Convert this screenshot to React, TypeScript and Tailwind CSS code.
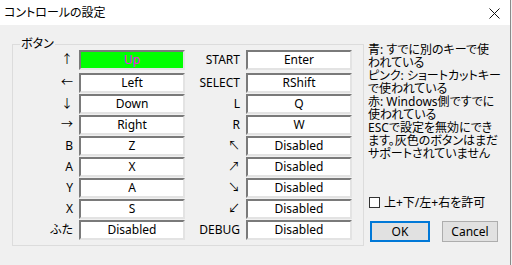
import React from 'react';

type Row = {
  leftLabel: string;
  leftKey: string;
  rightLabel: string;
  rightKey: string;
};

const ROWS: Row[] = [
  { leftLabel: '↑', leftKey: 'Up', rightLabel: 'START', rightKey: 'Enter' },
  { leftLabel: '←', leftKey: 'Left', rightLabel: 'SELECT', rightKey: 'RShift' },
  { leftLabel: '↓', leftKey: 'Down', rightLabel: 'L', rightKey: 'Q' },
  { leftLabel: '→', leftKey: 'Right', rightLabel: 'R', rightKey: 'W' },
  { leftLabel: 'B', leftKey: 'Z', rightLabel: '↖', rightKey: 'Disabled' },
  { leftLabel: 'A', leftKey: 'X', rightLabel: '↗', rightKey: 'Disabled' },
  { leftLabel: 'Y', leftKey: 'A', rightLabel: '↘', rightKey: 'Disabled' },
  { leftLabel: 'X', leftKey: 'S', rightLabel: '↙', rightKey: 'Disabled' },
  { leftLabel: 'ふた', leftKey: 'Disabled', rightLabel: 'DEBUG', rightKey: 'Disabled' },
];

const NOTES = [
  '青: すでに別のキーで使',
  'われている',
  'ピンク: ショートカットキー',
  'で使われている',
  '赤: Windows側ですでに',
  '使われている',
  'ESCで設定を無効にでき',
  'ます。灰色のボタンはまだ',
  'サポートされていません',
];

const KeyField: React.FC<{ value: string; highlight?: boolean }> = ({ value, highlight }) => (
  <div
    className={`h-[20px] border-2 border-t-[#7a7a7a] border-l-[#7a7a7a] border-b-[#e3e3e3] border-r-[#e3e3e3] flex items-center justify-center leading-[16px] ${
      highlight ? 'bg-[#00ff00] text-[#ff00ff]' : 'bg-white text-black'
    }`}
  >
    {value}
  </div>
);

const Label: React.FC<{ text: string }> = ({ text }) => (
  <div className="h-[20px] flex items-center justify-end leading-[20px] text-black">{text}</div>
);

export default function App() {
  return (
    <div
      className="w-[512px] h-[265px] bg-[#f0f0f0] text-[12px] text-black [font-feature-settings:'palt']"
      style={{ fontFamily: '"Noto Sans", "Noto Sans CJK JP", sans-serif' }}
    >
      <div className="w-[511px] h-[265px] border-r border-[#8a8a8a] flex flex-col">
        {/* title bar */}
        <div className="h-[25px] bg-white flex items-center justify-between pl-[4px] pr-[10px]">
          <span className="leading-[14px]">コントロールの設定</span>
          <svg width="11" height="11" viewBox="0 0 11 11" className="mt-[1px]">
            <path d="M0.5 0.5 L10.5 10.5 M10.5 0.5 L0.5 10.5" stroke="#111" strokeWidth="1" />
          </svg>
        </div>

        {/* body */}
        <div className="flex-1 flex pl-[12px]">
          <div className="relative mt-[19px] w-[352px] h-[202px] border border-[#dcdcdc]">
            <span className="absolute -top-[8px] left-[7px] px-[1px] bg-[#f0f0f0] leading-[14px]">ボタン</span>
            <div className="grid grid-cols-[60px_106px_49px_106px] gap-x-[6px] gap-y-[1px] pt-[5px]">
              {ROWS.map((r, i) => (
                <React.Fragment key={i}>
                  <div className={i === 0 ? 'mb-[2px]' : ''}>
                    <Label text={r.leftLabel} />
                  </div>
                  <div className={i === 0 ? 'mb-[2px]' : ''}>
                    <KeyField value={r.leftKey} highlight={i === 0} />
                  </div>
                  <div className={i === 0 ? 'mb-[2px]' : ''}>
                    <Label text={r.rightLabel} />
                  </div>
                  <div className={i === 0 ? 'mb-[2px]' : ''}>
                    <KeyField value={r.rightKey} />
                  </div>
                </React.Fragment>
              ))}
            </div>
          </div>

          <div className="ml-[4px] pt-[18px] flex flex-col">
            <div className="leading-[13px]">
              {NOTES.map((line) => (
                <div key={line} className="whitespace-nowrap">
                  {line}
                </div>
              ))}
            </div>

            <div className="mt-[36px] flex items-center h-[13px] pl-[1px]">
              <div className="w-[11px] h-[11px] border border-[#333] bg-white" />
              <span className="ml-[4px] leading-[13px]">上+下/左+右を許可</span>
            </div>

            <div className="mt-[12px] flex items-center pl-[2px]">
              <button className="w-[60px] h-[21px] border-2 border-[#0078d7] bg-[#e1e1e1] leading-[16px]">OK</button>
              <button className="ml-[12px] w-[56px] h-[21px] border border-[#adadad] bg-[#e1e1e1] leading-[16px]">Cancel</button>
            </div>
          </div>
        </div>
      </div>
    </div>
  );
}
